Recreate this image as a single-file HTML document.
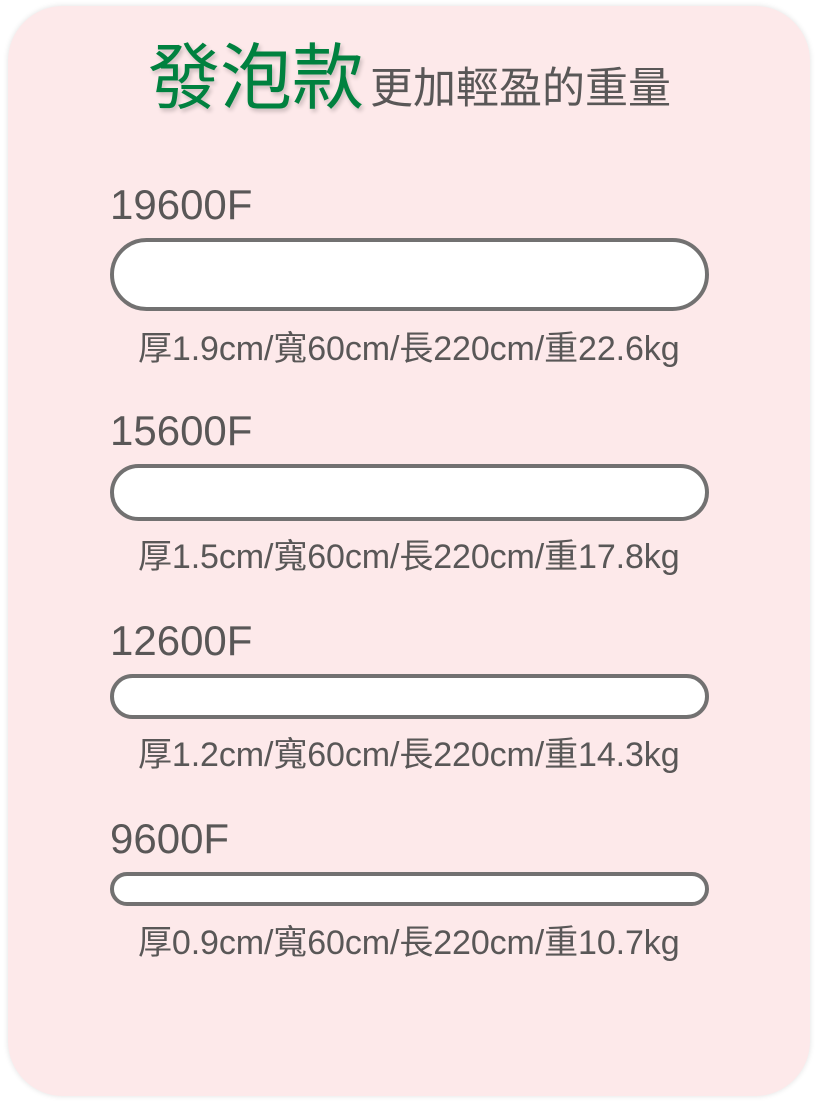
<!DOCTYPE html>
<html><head><meta charset="utf-8"><style>
html,body{margin:0;padding:0;width:818px;height:1106px;background:#fff;overflow:hidden}
.card{position:absolute;left:8px;top:6px;width:802px;height:1090px;background:#fde9ea;border-radius:55px;box-shadow:0 0 6px rgba(0,0,0,0.12)}
.t{position:absolute;white-space:nowrap;font-family:"Liberation Sans","Noto Sans CJK TC",sans-serif;color:#595757}
.bar{position:absolute;left:110px;width:591px;background:#fff;border:4px solid #727171;box-sizing:content-box}
</style></head><body>
<div class="card"></div>
<div class="t" style="left:148px;top:34px;font-size:72px;line-height:90px;color:#00813f;text-shadow:2px 3px 4px rgba(0,0,0,0.2)">發泡款</div>
<div class="t" style="left:370px;top:64px;font-size:43px;line-height:50px">更加輕盈的重量</div>

<div class="t" style="left:110px;top:180px;font-size:42px;line-height:50px">19600F</div>
<div class="bar" style="top:238px;height:65px;border-radius:37px"></div>
<div class="t" style="left:138px;top:328px;font-size:34px;line-height:42px;letter-spacing:-0.1px">厚1.9cm/寬60cm/長220cm/重22.6kg</div>

<div class="t" style="left:110px;top:406px;font-size:42px;line-height:50px">15600F</div>
<div class="bar" style="top:464px;height:49px;border-radius:29px"></div>
<div class="t" style="left:138px;top:536px;font-size:34px;line-height:42px;letter-spacing:-0.1px">厚1.5cm/寬60cm/長220cm/重17.8kg</div>

<div class="t" style="left:110px;top:616px;font-size:42px;line-height:50px">12600F</div>
<div class="bar" style="top:674px;height:37px;border-radius:23px"></div>
<div class="t" style="left:138px;top:734px;font-size:34px;line-height:42px;letter-spacing:-0.1px">厚1.2cm/寬60cm/長220cm/重14.3kg</div>

<div class="t" style="left:110px;top:814px;font-size:42px;line-height:50px">9600F</div>
<div class="bar" style="top:872px;height:26px;border-radius:17px"></div>
<div class="t" style="left:138px;top:922px;font-size:34px;line-height:42px;letter-spacing:-0.1px">厚0.9cm/寬60cm/長220cm/重10.7kg</div>
</body></html>
